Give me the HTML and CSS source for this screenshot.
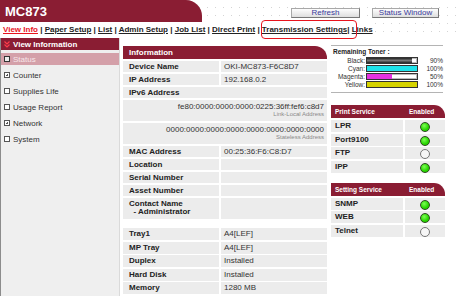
FILE: index.html
```html
<!DOCTYPE html>
<html lang="en">
<head>
    <meta charset="UTF-8">
    <meta name="viewport" content="width=device-width, initial-scale=1.0">
    <title>MC873</title>
    <link rel="stylesheet" href="styles.css">
</head>
<body>
    <header class="top">
        <div class="top-bar">
            <div class="brand">MC873</div>
            <div class="actions">
                <button class="btn btn-refresh">Refresh</button>
                <button class="btn btn-status">Status Window</button>
            </div>
        </div>
        <nav class="menu">
            <div class="menu-links">
                <a href="#" class="current">View Info</a> | <a href="#">Paper Setup</a> | <a href="#">List</a> | <a href="#">Admin Setup</a> | <a href="#">Job List</a> | <a href="#">Direct Print</a> | <a href="#">Transmission Settings</a>| <a href="#">Links</a>
            </div>
        </nav>
        <span class="mark"></span>
    </header>

    <div class="page">
        <aside class="side">
            <div class="side-head">
                <svg width="6" height="7" viewBox="0 0 6 7"><polyline points="0.5,0.5 3,3 5.5,0.5" fill="none" stroke="#ff3b4a" stroke-width="1.2"/><polyline points="0.5,3.5 3,6 5.5,3.5" fill="none" stroke="#ff3b4a" stroke-width="1.2"/></svg>
                View Information
            </div>
            <ul class="side-list">
                <li class="active"><span class="box"></span>Status</li>
                <li><span class="box plus"></span>Counter</li>
                <li><span class="box"></span>Supplies Life</li>
                <li><span class="box"></span>Usage Report</li>
                <li><span class="box plus"></span>Network</li>
                <li><span class="box"></span>System</li>
            </ul>
        </aside>

        <main class="info">
            <div class="panel-head">Information</div>
            <div class="grid">
                <div class="lbl">Device Name</div><div class="val">OKI-MC873-F6C8D7</div>
                <div class="lbl">IP Address</div><div class="val">192.168.0.2</div>
                <div class="lbl wide">IPv6 Address</div>
                <div class="addr wide">fe80:0000:0000:0000:0225:36ff:fef6:c8d7<small>Link-Local Address</small></div>
                <div class="addr wide">0000:0000:0000:0000:0000:0000:0000:0000<small>Stateless Address</small></div>
                <div class="lbl">MAC Address</div><div class="val">00:25:36:F6:C8:D7</div>
                <div class="lbl">Location</div><div class="val"></div>
                <div class="lbl">Serial Number</div><div class="val"></div>
                <div class="lbl">Asset Number</div><div class="val"></div>
                <div class="lbl tall">Contact Name<br>&nbsp;&nbsp;- Administrator</div><div class="val"></div>
            </div>
            <div class="grid grid-hw">
                <div class="lbl">Tray1</div><div class="val">A4[LEF]</div>
                <div class="lbl">MP Tray</div><div class="val">A4[LEF]</div>
                <div class="lbl">Duplex</div><div class="val">Installed</div>
                <div class="lbl">Hard Disk</div><div class="val">Installed</div>
                <div class="lbl">Memory</div><div class="val">1280 MB</div>
            </div>
        </main>

        <section class="status">
            <div class="toner">
                <div class="toner-title">Remaining Toner :</div>
                <div class="toner-row"><span class="t-name">Black:</span><span class="bar"><span class="fill black" style="width: 90%"></span></span><span class="t-pct">90%</span></div>
                <div class="toner-row"><span class="t-name">Cyan:</span><span class="bar"><span class="fill cyan" style="width: 100%"></span></span><span class="t-pct">100%</span></div>
                <div class="toner-row"><span class="t-name">Magenta:</span><span class="bar"><span class="fill magenta" style="width: 50%"></span></span><span class="t-pct">50%</span></div>
                <div class="toner-row"><span class="t-name">Yellow:</span><span class="bar"><span class="fill yellow" style="width: 100%"></span></span><span class="t-pct">100%</span></div>
            </div>

            <div class="svc">
                <div class="svc-head"><span>Print Service</span><span>Enabled</span></div>
                <div class="svc-row"><span>LPR</span><span class="dot on"></span></div>
                <div class="svc-row"><span>Port9100</span><span class="dot on"></span></div>
                <div class="svc-row"><span>FTP</span><span class="dot"></span></div>
                <div class="svc-row"><span>IPP</span><span class="dot on"></span></div>
            </div>

            <div class="svc svc-setting">
                <div class="svc-head"><span>Setting Service</span><span>Enabled</span></div>
                <div class="svc-row"><span>SNMP</span><span class="dot on"></span></div>
                <div class="svc-row"><span>WEB</span><span class="dot on"></span></div>
                <div class="svc-row"><span>Telnet</span><span class="dot"></span></div>
            </div>
        </section>
    </div>
</body>
</html>
```

FILE: styles.css
```css
* {
    margin: 0;
    padding: 0;
    box-sizing: border-box;
}

body {
    width: 460px;
    height: 296px;
    overflow: hidden;
    background: #fff;
    color: #222;
    font-family: 'Liberation Sans', Arial, sans-serif;
    font-size: 8px;
}

/* Header */
.top {
    position: relative;
    background-color: #fff;
    background-image: linear-gradient(90deg, #fff 7px, transparent 7px),
                      linear-gradient(#fff 7px, #d4d4d4 7px);
    background-size: 8px 8px;
}

.top-bar {
    display: flex;
    height: 22px;
}

.brand {
    width: 202px;
    background: #8a1d33;
    border-top-right-radius: 16px;
    color: #fff;
    font-size: 13px;
    font-weight: bold;
    padding: 4px 0 0 5px;
}

.actions {
    display: flex;
    gap: 12px;
    padding: 8px 0 0 89px;
}

.btn {
    height: 10px;
    background: linear-gradient(#fdfdfd, #dedede);
    border: 1px solid #a8a8a8;
    border-right-color: #777;
    border-bottom-color: #777;
    color: #3a3a9c;
    font-family: inherit;
    font-size: 8px;
    line-height: 8px;
}

.btn-refresh { width: 69px; }
.btn-status { width: 67px; }

.menu {
    height: 16px;
    display: flex;
}

.menu-links {
    background: #fff;
    padding: 3px 2px 0 3px;
    font-weight: bold;
    white-space: nowrap;
}

.menu-links a {
    color: #222;
}

.menu-links a.current {
    color: #e8141e;
}

.mark {
    position: absolute;
    left: 261px;
    top: 20px;
    width: 96px;
    height: 19px;
    border: 1.5px solid #e8141e;
    border-radius: 4px;
}

/* Page */
.page {
    display: flex;
    align-items: flex-start;
}

.side {
    width: 120px;
    height: 258px;
    background: #efefef;
    border-left: 1px solid #8c8c8c;
    border-right: 1px solid #dadada;
}

.side-head {
    height: 12px;
    background: #8a1d33;
    color: #fff;
    font-weight: bold;
    padding: 1px 0 0 3px;
    display: flex;
    align-items: center;
    gap: 3px;
}

.side-list {
    list-style: none;
    margin-top: 3px;
}

.side-list li {
    height: 12px;
    margin-bottom: 4px;
    display: flex;
    align-items: center;
    gap: 2px;
    padding-left: 3px;
    color: #333;
}

.side-list li.active {
    background: #d4a0a9;
    color: #f7e6e9;
}

.box {
    width: 6px;
    height: 6px;
    border: 1px solid #555;
    background: #fff;
    position: relative;
    margin-right: 1px;
}

.active .box {
    background: #eee;
    border-color: #333;
}

.box.plus::before,
.box.plus::after {
    content: '';
    position: absolute;
    background: #555;
}

.box.plus::before {
    left: 1px;
    top: 1.5px;
    width: 2px;
    height: 1px;
}

.box.plus::after {
    left: 1.5px;
    top: 1px;
    width: 1px;
    height: 2px;
}

/* Information */
.info {
    width: 204px;
    margin: 8px 0 0 3px;
}

.panel-head {
    height: 13px;
    background: #8a1d33;
    border-top-right-radius: 12px;
    color: #fff;
    font-weight: bold;
    padding: 2px 0 0 6px;
}

.grid {
    display: grid;
    grid-template-columns: 96px 1fr;
    gap: 2px;
    margin-top: 2px;
}

.lbl,
.val,
.addr {
    background: #ececec;
    min-height: 11px;
    line-height: 11px;
}

.lbl {
    font-weight: bold;
    padding-left: 6px;
}

.val {
    padding-left: 3px;
    color: #333;
}

.wide {
    grid-column: 1 / 3;
}

.addr {
    height: 21px;
    text-align: right;
    padding: 2px 3px 0 0;
    line-height: 9px;
    color: #333;
}

.addr small {
    display: block;
    font-size: 6px;
    line-height: 7px;
    color: #8a8a8a;
}

.lbl.tall {
    height: 21px;
    line-height: 8px;
    padding-top: 2px;
}

.grid-hw {
    margin-top: 9px;
    gap: 1.5px 2px;
}

.grid-hw .lbl,
.grid-hw .val {
    height: 12px;
    line-height: 12px;
}

/* Right column */
.status {
    width: 114px;
    margin: 7px 0 0 4px;
}

.toner {
    width: 112px;
    height: 48px;
    border-top: 1px solid #b4b4b4;
    border-bottom: 1px solid #b4b4b4;
    padding: 2px 0 0 2px;
    font-size: 6.5px;
}

.toner-title {
    font-weight: bold;
    margin-bottom: 1px;
}

.toner-row {
    display: flex;
    align-items: center;
    height: 8px;
}

.t-name {
    width: 32px;
    text-align: right;
    color: #333;
}

.bar {
    width: 52px;
    height: 7px;
    margin-left: 1px;
    border: 1px solid #333;
    background: #fff;
    box-shadow: inset 0 0 0 1px #bbb;
    display: flex;
}

.fill {
    height: 100%;
}

.fill.black { background: linear-gradient(#222, #777 50%, #222); }
.fill.cyan { background: #1fe3ea; }
.fill.magenta { background: #e433e0; }
.fill.yellow { background: #d6d400; }

.t-pct {
    flex: 1;
    text-align: right;
    color: #333;
}

.svc {
    margin-top: 12px;
    display: grid;
    grid-template-columns: 72px 1fr;
    gap: 1.5px 2px;
}

.svc-setting {
    margin-top: 10px;
}

.svc-head {
    grid-column: 1 / 3;
    height: 13px;
    background: #8a1d33;
    border-top-right-radius: 11px;
    color: #fff;
    font-size: 6.5px;
    font-weight: bold;
    display: grid;
    grid-template-columns: 74px 1fr;
    align-items: center;
    padding-left: 4px;
    margin-bottom: 0.5px;
}

.svc-row {
    display: contents;
}

.svc-row span {
    height: 12px;
    line-height: 12px;
    background: #ececec;
    font-weight: bold;
    padding-left: 4px;
}

.svc-row .dot {
    position: relative;
    padding: 0;
}

.dot::after {
    content: '';
    position: absolute;
    left: 15px;
    top: 2px;
    width: 8px;
    height: 8px;
    border-radius: 50%;
    border: 1px solid #777;
    background: #f6f6f6;
}

.dot.on::after {
    border-color: #2d4a1f;
    background: radial-gradient(circle at 40% 35%, #7dff55, #27d400 60%);
}
```
